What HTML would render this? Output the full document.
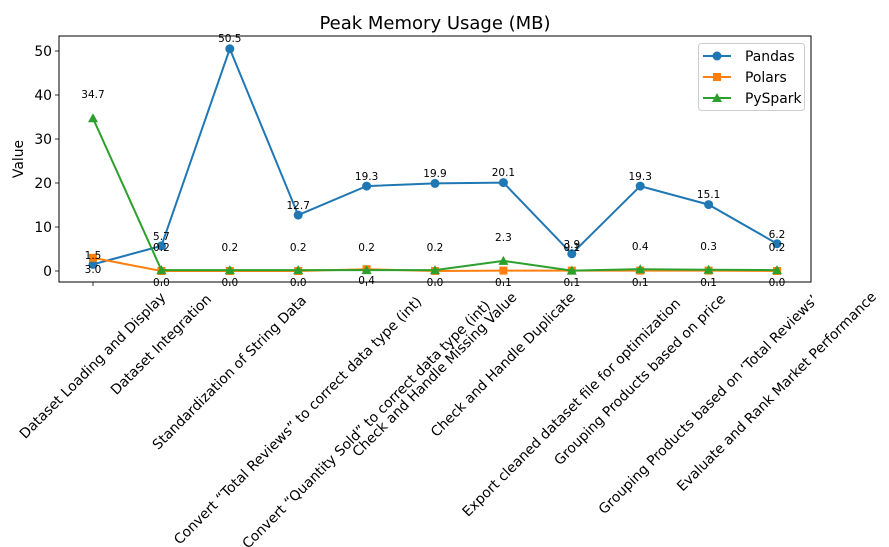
<!DOCTYPE html>
<html><head><meta charset="utf-8"><style>
html,body{margin:0;padding:0;background:#fff;}
svg{display:block;font-family:"DejaVu Sans","Liberation Sans",sans-serif;}
</style></head><body>
<svg width="889" height="547" viewBox="0 0 889 547" xmlns="http://www.w3.org/2000/svg">
<rect width="889" height="547" fill="#fff"/>
<text x="435" y="29" font-size="18" text-anchor="middle" fill="#000">Peak Memory Usage (MB)</text>
<g stroke="#000" stroke-width="0.8">
<line x1="55" y1="271" x2="59" y2="271"/><line x1="55" y1="227" x2="59" y2="227"/><line x1="55" y1="183" x2="59" y2="183"/><line x1="55" y1="139" x2="59" y2="139"/><line x1="55" y1="95" x2="59" y2="95"/><line x1="55" y1="51" x2="59" y2="51"/>
<line x1="93" y1="282" x2="93" y2="286"/><line x1="161.4" y1="282" x2="161.4" y2="286"/><line x1="229.8" y1="282" x2="229.8" y2="286"/><line x1="298.2" y1="282" x2="298.2" y2="286"/><line x1="366.6" y1="282" x2="366.6" y2="286"/><line x1="435" y1="282" x2="435" y2="286"/><line x1="503.4" y1="282" x2="503.4" y2="286"/><line x1="571.8" y1="282" x2="571.8" y2="286"/><line x1="640.2" y1="282" x2="640.2" y2="286"/><line x1="708.6" y1="282" x2="708.6" y2="286"/><line x1="777" y1="282" x2="777" y2="286"/>
</g>
<g font-size="13.9" text-anchor="end" fill="#000">
<text x="52" y="276">0</text><text x="52" y="232">10</text><text x="52" y="188">20</text><text x="52" y="144">30</text><text x="52" y="100">40</text><text x="52" y="56">50</text>
</g>
<text transform="translate(23,159) rotate(-90)" font-size="13.9" text-anchor="middle" fill="#000">Value</text>
<polyline fill="none" stroke="#1f77b4" stroke-width="2" points="93,264.4 161.4,245.9 229.8,48.8 298.2,215.1 366.6,186.1 435,183.4 503.4,182.6 571.8,253.8 640.2,186.1 708.6,204.6 777,243.7"/>
<g fill="#1f77b4">
<circle cx="93" cy="264.4" r="4.5"/><circle cx="161.4" cy="245.9" r="4.5"/><circle cx="229.8" cy="48.8" r="4.5"/><circle cx="298.2" cy="215.1" r="4.5"/><circle cx="366.6" cy="186.1" r="4.5"/><circle cx="435" cy="183.4" r="4.5"/><circle cx="503.4" cy="182.6" r="4.5"/><circle cx="571.8" cy="253.8" r="4.5"/><circle cx="640.2" cy="186.1" r="4.5"/><circle cx="708.6" cy="204.6" r="4.5"/><circle cx="777" cy="243.7" r="4.5"/>
</g>
<polyline fill="none" stroke="#ff7f0e" stroke-width="2" points="93,257.8 161.4,271 229.8,271 298.2,271 366.6,269.2 435,271 503.4,270.6 571.8,270.6 640.2,270.6 708.6,270.6 777,271"/>
<g fill="#ff7f0e">
<rect x="89" y="253.8" width="8" height="8"/><rect x="157.4" y="267" width="8" height="8"/><rect x="225.8" y="267" width="8" height="8"/><rect x="294.2" y="267" width="8" height="8"/><rect x="362.6" y="265.2" width="8" height="8"/><rect x="431" y="267" width="8" height="8"/><rect x="499.4" y="266.6" width="8" height="8"/><rect x="567.8" y="266.6" width="8" height="8"/><rect x="636.2" y="266.6" width="8" height="8"/><rect x="704.6" y="266.6" width="8" height="8"/><rect x="773" y="267" width="8" height="8"/>
</g>
<polyline fill="none" stroke="#2ca02c" stroke-width="2" points="93,118.3 161.4,270.1 229.8,270.1 298.2,270.1 366.6,270.1 435,270.1 503.4,260.9 571.8,270.6 640.2,269.2 708.6,269.7 777,270.1"/>
<g fill="#2ca02c">
<polygon points="93,113.3 88,122.3 98,122.3"/><polygon points="161.4,265.1 156.4,274.1 166.4,274.1"/><polygon points="229.8,265.1 224.8,274.1 234.8,274.1"/><polygon points="298.2,265.1 293.2,274.1 303.2,274.1"/><polygon points="366.6,265.1 361.6,274.1 371.6,274.1"/><polygon points="435,265.1 430,274.1 440,274.1"/><polygon points="503.4,255.9 498.4,264.9 508.4,264.9"/><polygon points="571.8,265.6 566.8,274.6 576.8,274.6"/><polygon points="640.2,264.2 635.2,273.2 645.2,273.2"/><polygon points="708.6,264.7 703.6,273.7 713.6,273.7"/><polygon points="777,265.1 772,274.1 782,274.1"/>
</g>
<rect x="59" y="36" width="752" height="246" fill="none" stroke="#000" stroke-width="1"/>
<g font-size="10.5" text-anchor="middle" fill="#000">
<text x="93" y="259">1.5</text><text x="161.4" y="240">5.7</text><text x="229.8" y="42">50.5</text><text x="298.2" y="209">12.7</text><text x="366.6" y="180">19.3</text><text x="435" y="177">19.9</text><text x="503.4" y="176">20.1</text><text x="571.8" y="248">3.9</text><text x="640.2" y="180">19.3</text><text x="708.6" y="198">15.1</text><text x="777" y="238">6.2</text>
<text x="93" y="273">3.0</text><text x="161.4" y="286">0.0</text><text x="229.8" y="286">0.0</text><text x="298.2" y="286">0.0</text><text x="366.6" y="284">0.4</text><text x="435" y="286">0.0</text><text x="503.4" y="286">0.1</text><text x="571.8" y="286">0.1</text><text x="640.2" y="286">0.1</text><text x="708.6" y="286">0.1</text><text x="777" y="286">0.0</text>
<text x="93" y="98">34.7</text><text x="161.4" y="251">0.2</text><text x="229.8" y="251">0.2</text><text x="298.2" y="251">0.2</text><text x="366.6" y="251">0.2</text><text x="435" y="251">0.2</text><text x="503.4" y="241">2.3</text><text x="571.8" y="251">0.1</text><text x="640.2" y="250">0.4</text><text x="708.6" y="250">0.3</text><text x="777" y="251">0.2</text>
</g>
<g font-size="13.9" text-anchor="middle" dominant-baseline="central" fill="#000">
<text transform="translate(93,366) rotate(-45)">Dataset Loading and Display</text>
<text transform="translate(161.4,345) rotate(-45)">Dataset Integration</text>
<text transform="translate(229.8,373) rotate(-45)">Standardization of String Data</text>
<text transform="translate(298.2,421) rotate(-45)">Convert “Total Reviews” to correct data type (int)</text>
<text transform="translate(366.6,425) rotate(-45)">Convert “Quantity Sold” to correct data type (int)</text>
<text transform="translate(435,375) rotate(-45)">Check and Handle Missing Value</text>
<text transform="translate(503.4,365) rotate(-45)">Check and Handle Duplicate</text>
<text transform="translate(571.8,408) rotate(-45)">Export cleaned dataset file for optimization</text>
<text transform="translate(640.2,380) rotate(-45)">Grouping Products based on price</text>
<text transform="translate(708.6,405) rotate(-45)">Grouping Products based on ‘Total Reviews’</text>
<text transform="translate(777,392) rotate(-45)">Evaluate and Rank Market Performance</text>
</g>
<rect x="698.5" y="43.5" width="106" height="67" rx="3" fill="#fff" stroke="#ccc" stroke-width="1"/>
<line x1="703" y1="56" x2="731" y2="56" stroke="#1f77b4" stroke-width="2"/><circle cx="717" cy="56" r="4.5" fill="#1f77b4"/>
<line x1="703" y1="77" x2="731" y2="77" stroke="#ff7f0e" stroke-width="2"/><rect x="713" y="73" width="8" height="8" fill="#ff7f0e"/>
<line x1="703" y1="98" x2="731" y2="98" stroke="#2ca02c" stroke-width="2"/><polygon points="717,93 712,102 722,102" fill="#2ca02c"/>
<g font-size="13.9" fill="#000">
<text x="745" y="61">Pandas</text><text x="745" y="82">Polars</text><text x="745" y="103">PySpark</text>
</g>
</svg>
</body></html>
